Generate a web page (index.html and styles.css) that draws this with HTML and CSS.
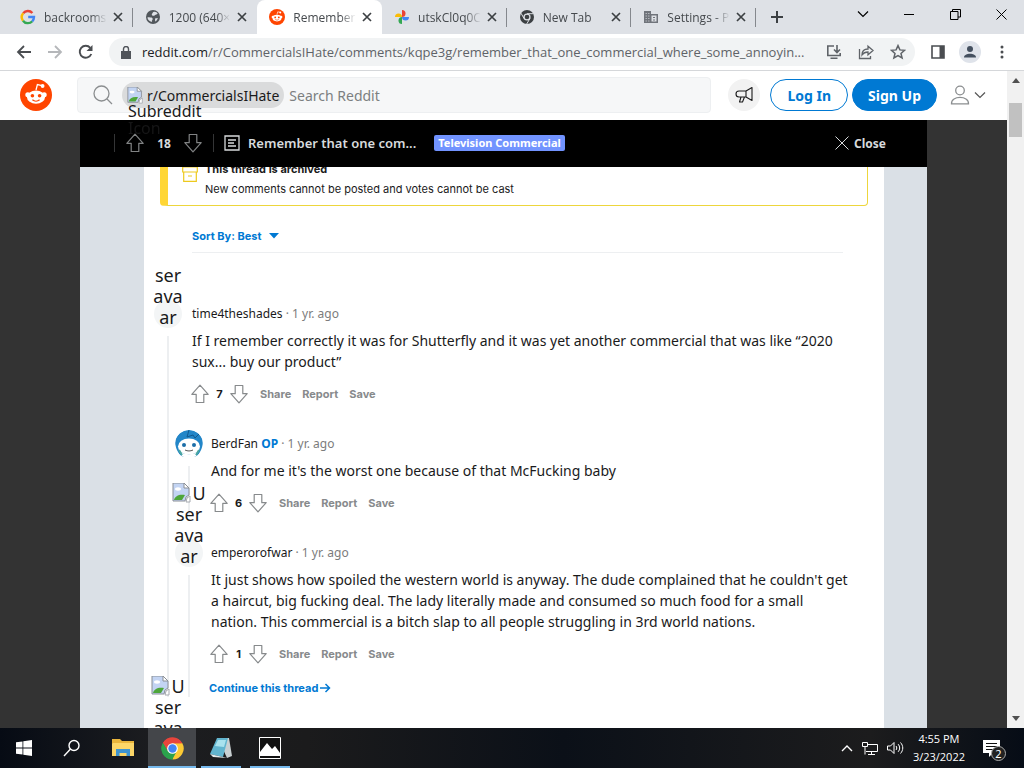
FILE: index.html
```html
<!DOCTYPE html>
<html lang="en">
<head>
    <meta charset="UTF-8">
    <meta name="viewport" content="width=device-width, initial-scale=1.0">
    <title>Remember that one commercial</title>
    <link rel="stylesheet" href="styles.css">
</head>
<body>
    <!-- shared icons -->
    <svg class="defs" aria-hidden="true">
        <symbol id="x" viewBox="0 0 10 10"><path d="M1 1l8 8M9 1l-8 8" fill="none" stroke="currentColor" stroke-width="1.7"/></symbol>
        <symbol id="up" viewBox="0 0 20 20"><path d="M10 1.2L18.2 10.3H13.8V18.5H6.2V10.3H1.8z" fill="none" stroke="currentColor" stroke-width="1.2" stroke-linejoin="round"/></symbol>
        <symbol id="down" viewBox="0 0 20 20"><path d="M10 18.8L18.2 9.7H13.8V1.5H6.2V9.7H1.8z" fill="none" stroke="currentColor" stroke-width="1.2" stroke-linejoin="round"/></symbol>
        <symbol id="chevron" viewBox="0 0 12 12"><path d="M1 3.5l5 5 5-5" fill="none" stroke="currentColor" stroke-width="1.2"/></symbol>
        <symbol id="broken" viewBox="0 0 20 20">
            <path d="M1 0h11l5 5v7l-3 2-1 4H1z" fill="#c3d4f3" stroke="#8a8f96"/>
            <path d="M12 0l5 5h-5z" fill="#fff" stroke="#8a8f96"/>
            <ellipse cx="6" cy="6" rx="3" ry="1.7" fill="#fff"/>
            <path d="M2 17c1-4 5-6 11-5l-3 5z" fill="#4ea63a"/>
            <path d="M18 13l-3 2-1 4h4z" fill="#fff" stroke="#a5a9af"/>
        </symbol>
        <symbol id="snoo" viewBox="0 0 32 32">
            <circle cx="16" cy="16" r="16" fill="#ff4500"/>
            <path d="M16 11l1.4-5.4 4.6 1" fill="none" stroke="#fff" stroke-width="1.3"/>
            <circle cx="22.6" cy="7" r="1.9" fill="#fff"/>
            <circle cx="7.8" cy="15.8" r="2.5" fill="#fff"/>
            <circle cx="24.2" cy="15.8" r="2.5" fill="#fff"/>
            <ellipse cx="16" cy="18.2" rx="9" ry="6.6" fill="#fff"/>
            <circle cx="12.4" cy="16.8" r="1.8" fill="#ff4500"/>
            <circle cx="19.6" cy="16.8" r="1.8" fill="#ff4500"/>
            <path d="M12.4 20.8c2 1.7 5.2 1.7 7.2 0" fill="none" stroke="#ff4500" stroke-width="1.2"/>
        </symbol>
        <symbol id="chrome" viewBox="0 0 24 24">
            <path d="M12 12L2 6.2A11.6 11.6 0 0 1 22.1 6.2z" fill="#e8453c"/>
            <path d="M12 12L22.1 6.2A11.6 11.6 0 0 1 12 23.6z" fill="#fcc934"/>
            <path d="M12 12V23.6A11.6 11.6 0 0 1 2 6.2z" fill="#2ba24c"/>
            <path d="M12 6.4h10.2L17 15z" fill="#fcc934"/>
            <path d="M12 6.4h10.1A11.6 11.6 0 0 0 2 6.2L7.2 15z" fill="#e8453c"/>
            <path d="M2 6.2L7.2 14.8l4.8 2.8 4-2-4.2 8A11.6 11.6 0 0 1 2 6.2z" fill="#2ba24c"/>
            <circle cx="12" cy="12" r="5.6" fill="#fff"/><circle cx="12" cy="12" r="4.4" fill="#4285f4"/>
        </symbol>
    </svg>

    <div class="tab-strip">
        <div class="tabs">
            <div class="tab">
                <svg width="16" height="16" viewBox="0 0 16 16" fill="none" stroke-width="2.4"><path d="M3.2 4.3A6 6 0 0 1 12.4 4" stroke="#ea4335"/><path d="M3 11.7A6 6 0 0 1 3.2 4.3" stroke="#fbbc05"/><path d="M12.3 12.2A6 6 0 0 1 3 11.7" stroke="#34a853"/><path d="M8.2 8H14A6 6 0 0 1 12.2 12.3" stroke="#4285f4"/></svg>
                <span class="tab-title">backrooms</span>
                <button class="tab-close" aria-label="Close tab"><svg width="10" height="10"><use href="#x"/></svg></button>
            </div>
            <div class="tab no-line">
                <svg width="16" height="16" viewBox="0 0 16 16"><circle cx="8" cy="8" r="7" fill="#52575c"/><path d="M2.5 8.3c2 .2 4-.2 5 1 .8 1.5-1 2-.6 3.700-2.600-.4-4.400-2.400-4.400-4.700zM8 3.200c2-1.200 4 0 4.700 1.500-1 1.200-2.800.6-3.300 2-1.400.3-2.800-.4-2.600-1.500zM10 9.500l2.800-.6c-.2 1.500-1.200 2.900-2.600 3.500z" fill="#dee1e6"/></svg>
                <span class="tab-title">1200 (640×</span>
                <button class="tab-close" aria-label="Close tab"><svg width="10" height="10"><use href="#x"/></svg></button>
            </div>
            <div class="tab active">
                <svg width="16" height="16"><use href="#snoo"/></svg>
                <span class="tab-title">Remember</span>
                <button class="tab-close" aria-label="Close tab"><svg width="10" height="10"><use href="#x"/></svg></button>
            </div>
            <div class="tab">
                <svg width="16" height="16" viewBox="0 0 16 16"><path d="M8 8V1a3.500 3.500 0 0 1 0 7z" fill="#ea4335"/><path d="M8 8V1a3.500 3.500 0 0 1 0 7z" fill="#4285f4" transform="rotate(90 8 8)"/><path d="M8 8V1a3.500 3.500 0 0 1 0 7z" fill="#34a853" transform="rotate(180 8 8)"/><path d="M8 8V1a3.500 3.500 0 0 1 0 7z" fill="#fbbc04" transform="rotate(270 8 8)"/></svg>
                <span class="tab-title">utskCl0q0C</span>
                <button class="tab-close" aria-label="Close tab"><svg width="10" height="10"><use href="#x"/></svg></button>
            </div>
            <div class="tab">
                <svg width="16" height="16" viewBox="0 0 16 16"><circle cx="8" cy="8" r="7" fill="#3c4043"/><circle cx="8" cy="8" r="3.600" fill="#dee1e6"/><circle cx="8" cy="8" r="2.300" fill="#3c4043"/><path d="M8 4.700h6.300M5.100 9.600L2 4.200M10.900 9.600L7.700 15" stroke="#dee1e6" stroke-width="1"/></svg>
                <span class="tab-title">New Tab</span>
                <button class="tab-close" aria-label="Close tab"><svg width="10" height="10"><use href="#x"/></svg></button>
            </div>
            <div class="tab">
                <svg width="16" height="16" viewBox="0 0 16 16"><path d="M1 2h7v3h7v9H1z" fill="#70747b"/><path d="M2.500 4.500h4.500M2.500 7h4.500M2.500 9.500h4.500M2.500 12h4.500" stroke="#b4b7bd" stroke-dasharray="1.500 1"/><path d="M8.500 6.500h5v6h-5z" fill="#dee1e6"/><path d="M10 8.500h2M10 11h2" stroke="#70747b"/></svg>
                <span class="tab-title">Settings - P</span>
                <button class="tab-close" aria-label="Close tab"><svg width="10" height="10"><use href="#x"/></svg></button>
            </div>
        </div>
        <button class="new-tab" aria-label="New tab"><svg width="14" height="14" viewBox="0 0 14 14"><path d="M7 1v12M1 7h12" stroke="#3c4043" stroke-width="2"/></svg></button>
        <div class="window-buttons">
            <button aria-label="Search tabs"><svg width="12" height="12"><use href="#chevron"/></svg></button>
            <button aria-label="Minimize"><svg width="10" height="10"><path d="M0 5.500h10" stroke="#000"/></svg></button>
            <button aria-label="Restore"><svg width="11" height="11" fill="none" stroke="#000"><path d="M.5 2.500h7.500v8H.5zM2.500 2.500v-2h8v7.500H8"/></svg></button>
            <button aria-label="Close"><svg width="11" height="11"><path d="M.5.5l10 10M10.500.5l-10 10" stroke="#000"/></svg></button>
        </div>
    </div>

    <div class="toolbar">
        <div class="nav-buttons">
            <button aria-label="Back"><svg width="16" height="16" viewBox="0 0 16 16" fill="none" stroke="#4a4d51" stroke-width="1.800"><path d="M15 8H2M8 2L2 8l6 6"/></svg></button>
            <button aria-label="Forward"><svg width="16" height="16" viewBox="0 0 16 16" fill="none" stroke="#b5b7ba" stroke-width="1.800"><path d="M1 8h13M8 2l6 6-6 6"/></svg></button>
            <button aria-label="Reload"><svg width="16" height="16" viewBox="0 0 16 16"><path d="M13.300 10A6 6 0 1 1 12.300 3.800" fill="none" stroke="#4a4d51" stroke-width="1.900"/><path d="M14.500 1v6h-6z" fill="#4a4d51"/></svg></button>
        </div>
        <div class="omnibox">
            <svg width="10" height="13" viewBox="0 0 10 13"><path d="M0 5h10v8H0z" fill="#50545a"/><path d="M2.500 5.500V3a2.500 2.500 0 0 1 5 0v2.500" fill="none" stroke="#50545a" stroke-width="1.400"/></svg>
            <div class="url"><b>reddit.com</b>/r/CommercialsIHate/comments/kqpe3g/remember_that_one_commercial_where_some_annoyin...</div>
            <button aria-label="Install"><svg width="16" height="16" viewBox="0 0 16 16" fill="none" stroke="#5f6368" stroke-width="1.600"><path d="M8 2H1.800v9.500h12.400V9M4.500 14.200h7M11 1v7M8 5.500l3 3 3-3"/></svg></button>
            <button aria-label="Share"><svg width="16" height="16" viewBox="0 0 16 16" fill="none" stroke="#5f6368" stroke-width="1.300"><path d="M1.500 5v9.500h11V12M4 11c0-4 2.500-6 6-6V2.200l5 4.300-5 4.300V8c-3 0-4.500.8-6 3z"/></svg></button>
            <button aria-label="Bookmark"><svg width="16" height="16" viewBox="0 0 16 16"><path d="M8 1.600l1.900 4.300 4.600.4-3.500 3.100 1.100 4.600L8 11.600 3.900 14 5 9.400 1.500 6.300l4.600-.4z" fill="none" stroke="#5f6368" stroke-width="1.500"/></svg></button>
        </div>
        <div class="toolbar-right">
            <button aria-label="Side panel"><svg width="14" height="14"><path d="M1 1h12v12H1z" fill="none" stroke="#4a4d51" stroke-width="1.600"/><path d="M8.500 1H13v12H8.500z" fill="#4a4d51"/></svg></button>
            <button aria-label="Profile"><svg width="22" height="22"><circle cx="11" cy="11" r="11" fill="#dfe3ea"/><circle cx="11" cy="8" r="3" fill="#44505f"/><path d="M5 16.500c0-5 12-5 12 0z" fill="#44505f"/></svg></button>
            <button aria-label="Menu"><svg width="4" height="14" fill="#4a4d51"><circle cx="2" cy="2" r="1.500"/><circle cx="2" cy="7" r="1.500"/><circle cx="2" cy="12" r="1.500"/></svg></button>
        </div>
    </div>

    <div class="viewport">
        <div class="page">
            <header class="site-header">
                <a class="logo" href="#" aria-label="Home"><svg width="32" height="32"><use href="#snoo"/></svg></a>
                <label class="search">
                    <svg width="20" height="20" viewBox="0 0 20 20" fill="none" stroke="#8b8e90" stroke-width="1.300"><circle cx="8.500" cy="8.500" r="7.500"/><path d="M14 14l5 5"/></svg>
                    <span class="pill"><svg width="17" height="17"><use href="#broken"/></svg>r/CommercialsIHate
                        <span class="pill-alt">Subreddit<br><span class="faded">Icon</span></span>
                    </span>
                    <input type="text" placeholder="Search Reddit" aria-label="Search Reddit">
                </label>
                <button class="round" aria-label="Advertise"><svg width="20" height="20" viewBox="0 0 20 20" fill="none" stroke="#1a1a1b" stroke-width="1.100" stroke-linejoin="round"><path d="M12 6l6-3.500v13L12 12M12 6v6M12 6H5a3 3 0 0 0 0 6h7M7 12l-1.500 5h3l2-5"/></svg></button>
                <button class="btn">Log In</button>
                <button class="btn btn-fill">Sign Up</button>
                <button class="user" aria-label="User menu">
                    <svg width="20" height="20" viewBox="0 0 20 20" fill="none" stroke="#8b8e90" stroke-width="1.300"><circle cx="10" cy="5.500" r="4.300"/><path d="M1.500 18.800c-.4-8.500 17.400-8.500 17 0z"/></svg>
                    <svg width="12" height="12"><use href="#chevron"/></svg>
                </button>
            </header>

            <div class="overlay">
                <div class="post-bar">
                    <div class="post-votes">
                        <button aria-label="Upvote"><svg width="20" height="20"><use href="#up"/></svg></button>
                        <span>18</span>
                        <button aria-label="Downvote"><svg width="20" height="20"><use href="#down"/></svg></button>
                    </div>
                    <svg width="16" height="16" viewBox="0 0 16 16" fill="none" stroke="#d7dadc" stroke-width="1.300"><path d="M1 1h14v14H1zM4 5h8M4 8h6M4 11h8"/></svg>
                    <h1>Remember that one com...</h1>
                    <span class="flair">Television Commercial</span>
                    <button class="close"><svg width="14" height="14" viewBox="0 0 14 14"><path d="M.5.5l13 13M13.500.5l-13 13" stroke="#d7dadc"/></svg>Close</button>
                </div>

                <main class="post">
                    <div class="notice">
                        <svg width="16" height="24" viewBox="0 0 16 24" fill="none" stroke="#edc91e" stroke-width="1.200"><path d="M.7 8h14.600v5H.7zM1.700 13v9.300h12.600V13M6 17h4"/></svg>
                        <div><strong>This thread is archived</strong><p>New comments cannot be posted and votes cannot be cast</p></div>
                    </div>

                    <div class="sort"><button>Sort By: Best <svg width="10" height="6"><path d="M0 0h10L5 5.500z" fill="#0079d3"/></svg></button></div>

                    <section class="comments">
                        <article class="comment">
                            <div class="rail">
                                <div class="avatar"><span class="alt">ser<br>ava<br>ar</span></div>
                                <div class="line"></div>
                            </div>
                            <div class="main">
                                <div class="meta"><a href="#">time4theshades</a> · 1 yr. ago</div>
                                <p>If I remember correctly it was for Shutterfly and it was yet another commercial that was like “2020 sux... buy our product”</p>
                                <div class="actions">
                                    <button aria-label="Upvote"><svg width="20" height="20"><use href="#up"/></svg></button><span>7</span><button aria-label="Downvote"><svg width="20" height="20"><use href="#down"/></svg></button>
                                    <button>Share</button><button>Report</button><button>Save</button>
                                </div>

                                <div class="replies">
                                    <article class="comment">
                                        <div class="rail">
                                            <svg class="avatar" width="28" height="28" viewBox="0 0 28 28">
                                                <path d="M3 22C-5 8 6 0 14 0s19 8 11 22l-3 5H6z" fill="#2386c8"/>
                                                <path d="M14 0l-2 7 6-2 2 3 4-4" fill="none" stroke="#12598f"/>
                                                <ellipse cx="14" cy="16.500" rx="11" ry="8" fill="#fff"/>
                                                <path d="M6 22c4 3 12 3 16 0l-1 6H7z" fill="#fff"/>
                                                <circle cx="9" cy="15" r="2" fill="#1c6ea8"/><circle cx="19" cy="15" r="2" fill="#1c6ea8"/>
                                                <path d="M10 20c2.500 1.300 5.500 1.300 8 0" fill="none" stroke="#555"/>
                                                <path d="M4 20l3 5M24 20l-3 5" stroke="#4ca7a0" stroke-width="2"/>
                                            </svg>
                                            <div class="line"></div>
                                        </div>
                                        <div class="main">
                                            <div class="meta"><a href="#">BerdFan</a> <b>OP</b> · 1 yr. ago</div>
                                            <p>And for me it's the worst one because of that McFucking baby</p>
                                            <div class="actions">
                                                <button aria-label="Upvote"><svg width="20" height="20"><use href="#up"/></svg></button><span>6</span><button aria-label="Downvote"><svg width="20" height="20"><use href="#down"/></svg></button>
                                                <button>Share</button><button>Report</button><button>Save</button>
                                            </div>
                                        </div>
                                    </article>

                                    <article class="comment">
                                        <div class="rail">
                                            <div class="avatar"><span class="alt"><svg width="20" height="20"><use href="#broken"/></svg>U<br>ser<br>ava<br>ar</span></div>
                                            <div class="line"></div>
                                        </div>
                                        <div class="main">
                                            <div class="meta"><a href="#">emperorofwar</a> · 1 yr. ago</div>
                                            <p>It just shows how spoiled the western world is anyway. The dude complained that he couldn't get a haircut, big fucking deal. The lady literally made and consumed so much food for a small nation. This commercial is a bitch slap to all people struggling in 3rd world nations.</p>
                                            <div class="actions">
                                                <button aria-label="Upvote"><svg width="20" height="20"><use href="#up"/></svg></button><span>1</span><button aria-label="Downvote"><svg width="20" height="20"><use href="#down"/></svg></button>
                                                <button>Share</button><button>Report</button><button>Save</button>
                                            </div>
                                            <a class="continue" href="#">Continue this thread<svg width="11" height="10" viewBox="0 0 11 10"><path d="M0 5h9.500M5.500 1l4 4-4 4" fill="none" stroke="#0079d3" stroke-width="1.500"/></svg></a>
                                        </div>
                                    </article>
                                </div>
                            </div>
                        </article>

                        <article class="comment">
                            <div class="rail">
                                <div class="avatar"><span class="alt"><svg width="20" height="20"><use href="#broken"/></svg>U<br>ser<br>ava<br>ar</span></div>
                            </div>
                        </article>
                    </section>
                </main>
            </div>
        </div>

        <div class="scrollbar">
            <svg width="8" height="5"><path d="M0 5l4-5 4 5z" fill="#505050"/></svg>
            <div class="thumb"></div>
            <svg width="8" height="5"><path d="M0 0h8L4 5z" fill="#505050"/></svg>
        </div>
    </div>

    <footer class="taskbar">
        <button aria-label="Start"><svg width="16" height="16" fill="#fff"><path d="M0 2.300l6.500-.9v6.200H0zM7.300 1.300L16 0v7.600H7.300zM0 8.400h6.500v6.200L0 13.700zM7.300 8.400H16V16l-8.700-1.300z"/></svg></button>
        <button aria-label="Search"><svg width="18" height="18" fill="none" stroke="#fff" stroke-width="1.400"><circle cx="11" cy="6.500" r="5"/><path d="M7.500 10L1 17"/></svg></button>
        <div class="apps">
            <button aria-label="File Explorer"><svg width="22" height="20"><path d="M0 1h8l2 2h12v15H0z" fill="#e9b53c"/><path d="M1 5h21v13H0V6z" fill="#fcd668"/><path d="M4 11h14v7h-3.500v-3h-7v3H4z" fill="#3f94cf"/></svg></button>
            <button class="open current" aria-label="Chrome"><svg width="23" height="23"><use href="#chrome"/></svg></button>
            <button class="open" aria-label="Notepad"><svg width="22" height="22"><path d="M8 1h11l3 18-5 2z" fill="#c9d0d2"/><path d="M7 1h11l-5 19L0 17z" fill="#62b5cf"/><path d="M8 3h8l-2 7-9-1z" fill="#a9e2ee"/><path d="M0 17l13 3 4 1L3 20z" fill="#e4ecee"/></svg></button>
            <button class="open" aria-label="Photos"><svg width="22" height="22"><path d="M.5.500h21v21H.5z" fill="#111" stroke="#fff"/><path d="M1 19V15l7-9 5 6 3-3 5 7v3z" fill="#fff"/></svg></button>
        </div>
        <div class="tray">
            <svg width="12" height="8"><path d="M1 7l5-5 5 5" fill="none" stroke="#fff" stroke-width="1.400"/></svg>
            <svg width="16" height="15" fill="none" stroke="#fff"><path d="M6 3.500h9.500v7H4M9.500 10.500v3M6 13.500h7M.5 1.500h5v4h-5zM3 5.500v8"/></svg>
            <svg width="17" height="14" fill="none" stroke="#fff"><path d="M.5 5h3L7 1.500v11L3.500 9h-3zM9 5c1 1.200 1 2.800 0 4M11.200 3.200c2 2.300 2 5.300 0 7.600M13.500 1.500c3 3.300 3 7.700 0 11"/></svg>
            <div class="clock">4:55 PM<br>3/23/2022</div>
            <div class="notes"><svg width="17" height="17"><path d="M0 0h17v13h-7l-4 4v-4H0z" fill="#fff"/><path d="M3 3.500h11M3 6.500h11M3 9.500h7" stroke="#111"/></svg><span>2</span></div>
        </div>
    </footer>
</body>
</html>
```
FILE: styles.css
```css
* {
    box-sizing: border-box;
}
body {
    margin: 0;
    height: 100vh;
    display: flex;
    flex-direction: column;
    overflow: hidden;
    font-family: "Noto Sans", sans-serif;
    color: #1a1a1b;
}
button {
    border: none;
    background: none;
    padding: 0;
    font: inherit;
    color: inherit;
    display: flex;
    align-items: center;
    justify-content: center;
}
a {
    color: inherit;
    text-decoration: none;
}
p, h1 {
    margin: 0;
}
svg {
    flex-shrink: 0;
}
.defs {
    position: absolute;
    width: 0;
    height: 0;
}

/* browser window */
.tab-strip {
    display: flex;
    height: 34px;
    flex-shrink: 0;
    padding-left: 8px;
    background: #dee1e6;
    font: 12px "Open Sans", sans-serif;
    color: #45494d;
}
.tabs {
    display: flex;
    flex: 0 1 748px;
    min-width: 0;
}
.tab {
    flex: 1 1 0;
    min-width: 0;
    display: flex;
    align-items: center;
    padding: 0 10px 0 12px;
    position: relative;
}
.tab::after {
    content: "";
    position: absolute;
    right: 0;
    top: 8px;
    height: 19px;
    border-right: 1px solid #85888d;
}
.tab.active {
    background: #fff;
    border-radius: 8px 8px 0 0;
}
.tab.active::after, .tab.no-line::after {
    display: none;
}
.tab-title {
    flex: 1;
    margin-left: 8px;
    overflow: hidden;
    white-space: nowrap;
    mask-image: linear-gradient(to right, #000 75%, transparent);
}
.tab-close {
    width: 10px;
    margin-left: 6px;
    color: #3c4043;
}
.new-tab {
    width: 42px;
}
.window-buttons {
    display: flex;
    margin-left: auto;
    height: 28px;
    color: #000;
}
.window-buttons button {
    width: 46px;
}
.toolbar {
    display: flex;
    align-items: center;
    height: 37px;
    flex-shrink: 0;
    padding: 0 8px;
    border-bottom: 1px solid #d5d7da;
    background: #fff;
}
.nav-buttons {
    display: flex;
    width: 101px;
}
.nav-buttons button {
    width: 31px;
}
.omnibox {
    flex: 1;
    min-width: 0;
    height: 28px;
    display: flex;
    align-items: center;
    padding: 0 1px 0 12px;
    border-radius: 14px;
    background: #f1f3f4;
}
.omnibox button {
    width: 32px;
}
.url {
    flex: 1;
    min-width: 0;
    margin: 0 2px 0 11px;
    overflow: hidden;
    white-space: nowrap;
    text-overflow: ellipsis;
    font: 13px "Open Sans", sans-serif;
    color: #5f6368;
}
.url b {
    font-weight: normal;
    color: #202124;
}
.toolbar-right {
    display: flex;
    margin-left: 7px;
    margin-right: -2px;
}
.toolbar-right button {
    width: 32px;
}

/* page */
.viewport {
    flex: 1;
    min-height: 0;
    display: flex;
}
.page {
    flex: 1;
    min-width: 0;
    display: flex;
    flex-direction: column;
}
.site-header {
    display: flex;
    align-items: center;
    height: 49px;
    flex-shrink: 0;
    padding: 0 21px 1px 20px;
    background: #fff;
    font-size: 14px;
    position: relative;
    z-index: 1;
}
.logo {
    display: flex;
    margin-right: 25px;
}
.search {
    flex: 1;
    min-width: 0;
    display: flex;
    align-items: center;
    height: 36px;
    margin-right: 17px;
    padding: 0 15px;
    border: 1px solid #edeff1;
    border-radius: 4px;
    background: #f6f7f8;
}
.pill {
    display: flex;
    align-items: center;
    gap: 3px;
    height: 26px;
    margin-left: 9px;
    padding: 0 5px;
    border-radius: 13px;
    background: #dadbdc;
    position: relative;
    white-space: nowrap;
}
.pill-alt {
    position: absolute;
    left: 6px;
    top: 21px;
    font-size: 16px;
    line-height: 17px;
}
.faded {
    color: #1f1f20;
    opacity: 0.7;
}
.search input {
    flex: 1;
    min-width: 0;
    border: none;
    outline: none;
    padding: 0 5px;
    background: none;
    font: inherit;
}
.search input::placeholder {
    color: #7c7f81;
}
.round {
    width: 32px;
    height: 32px;
    margin-right: 10px;
    border-radius: 50%;
    background: #f2f2f2;
}
.btn {
    height: 32px;
    padding: 0 16px;
    margin-right: 4px;
    border: 1px solid #0079d3;
    border-radius: 16px;
    font-weight: bold;
    color: #0079d3;
}
.btn-fill {
    padding: 0 15px;
    background: #0079d3;
    color: #fff;
}
.user {
    gap: 4px;
    margin-left: 9px;
    color: #555;
}
.overlay {
    flex: 1;
    min-height: 0;
    display: flex;
    flex-direction: column;
    padding: 0 80px;
    background: #333;
}
.post-bar {
    display: flex;
    align-items: center;
    height: 47px;
    flex-shrink: 0;
    padding: 0 41px 1px 34px;
    background: #000;
    color: #d7dadc;
    font-size: 12px;
}
.post-votes {
    display: flex;
    align-items: center;
    justify-content: space-between;
    width: 100px;
    height: 18px;
    margin-right: 10px;
    padding: 0 10px;
    border: solid #343536;
    border-width: 0 1px;
    font-weight: bold;
}
.post-votes svg {
    color: #818384;
}
.post-bar h1 {
    margin: 0 18px 0 8px;
    font-size: 13px;
    font-weight: 600;
}
.flair {
    padding: 0 4px;
    border-radius: 2px;
    background: #7193ff;
    color: #fff;
    font-size: 11px;
    font-weight: 700;
    line-height: 16px;
}
.close {
    gap: 5px;
    margin-left: auto;
    font-weight: bold;
}
.post {
    flex: 1;
    min-height: 0;
    overflow: hidden;
    padding: 0 16px;
    border: solid #dae0e6;
    border-width: 0 43px 0 64px;
    background: #fff;
}
.notice {
    display: flex;
    gap: 7px;
    margin-top: -16px;
    padding: 7px 0 6px 14px;
    border: 1px solid #edd63c;
    border-left: 8px solid #ffd635;
    border-radius: 4px;
    font: 11px/20px Inter, sans-serif;
}
.sort {
    margin: 21px 25px 0 32px;
    padding-bottom: 7px;
    border-bottom: 1px solid #edeff1;
    font: bold 11px/18px Inter, sans-serif;
    color: #0079d3;
}
.sort svg {
    margin-left: 8px;
}

/* comments */
.comments {
    padding: 53px 18px 0 0;
    margin-left: -6px;
}
.comment {
    display: flex;
    gap: 10px;
}
.rail {
    width: 28px;
    flex-shrink: 0;
    display: flex;
    flex-direction: column;
    align-items: center;
}
.avatar {
    width: 28px;
    height: 28px;
    margin-top: -6px;
    flex-shrink: 0;
    border-radius: 50%;
    background: #f3f5f6;
    position: relative;
}
svg.avatar {
    background: none;
}
.alt {
    position: absolute;
    left: -3px;
    bottom: 0;
    width: 34px;
    font-size: 18px;
    line-height: 21px;
    text-align: center;
    white-space: nowrap;
}
.alt svg {
    vertical-align: -3px;
}
.line {
    flex: 1;
    width: 2px;
    margin-top: 8px;
    background: #edeff1;
}
.main {
    flex: 1;
    min-width: 0;
}
.meta {
    font-size: 12px;
    line-height: 16px;
    margin-bottom: 8px;
    color: #7c7c7c;
}
.meta a {
    color: #1a1a1b;
}
.meta b {
    color: #0079d3;
}
.comment p {
    font-size: 14px;
    line-height: 21px;
}
.actions {
    display: flex;
    align-items: center;
    gap: 11px;
    height: 24px;
    margin-top: 10px;
    margin-left: -2px;
    font: bold 11px Inter, sans-serif;
    color: #878a8c;
}
.actions span {
    width: 19px;
    margin: 0 -11px;
    text-align: center;
    color: #1a1a1b;
}
.replies {
    margin-left: -17px;
}
.replies .comment {
    gap: 8px;
    margin-top: 30px;
}
.continue {
    display: inline-flex;
    align-items: center;
    gap: 2px;
    margin-top: 14px;
    margin-left: -2px;
    font: bold 11px/16px Inter, sans-serif;
    color: #0079d3;
}
.comments > .comment + .comment {
    margin-top: 41px;
}

.scrollbar {
    width: 17px;
    display: flex;
    flex-direction: column;
    align-items: center;
    padding: 7px 0;
    background: #f1f1f1;
}
.thumb {
    width: 13px;
    height: 34px;
    margin-top: 20px;
    margin-bottom: auto;
    background: #c1c1c1;
}

/* taskbar */
.taskbar {
    display: flex;
    height: 40px;
    flex-shrink: 0;
    background: linear-gradient(to right, #060b14, #1c1d20 15%, #1b1b1c 30%, #0b1018 55%, #1c1c1d 85%, #060c16);
    color: #fff;
}
.taskbar button {
    width: 48px;
}
.apps {
    display: flex;
    gap: 1px;
    margin-left: 3px;
}
.apps button {
    position: relative;
}
.apps .current {
    background: #44464a;
}
.open::after {
    content: "";
    position: absolute;
    left: 4px;
    right: 4px;
    bottom: 0;
    height: 2px;
    background: #76b9ed;
}
.current::after {
    left: 0;
    right: 0;
}
.tray {
    display: flex;
    align-items: center;
    gap: 9px;
    margin-left: auto;
    padding-right: 24px;
}
.clock {
    font: 11px/18px "Open Sans", sans-serif;
    text-align: center;
}
.notes {
    display: flex;
    margin-left: 9px;
    position: relative;
}
.notes span {
    position: absolute;
    left: 8px;
    top: 6px;
    width: 15px;
    height: 15px;
    border: 1px solid #aaa;
    border-radius: 50%;
    background: #222;
    font-size: 11px;
    line-height: 13px;
    text-align: center;
}
```
